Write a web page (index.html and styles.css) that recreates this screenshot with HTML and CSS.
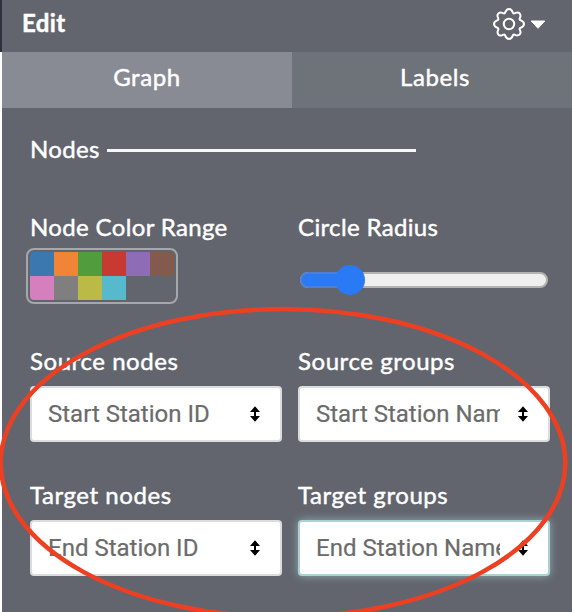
FILE: index.html
```
<!DOCTYPE html>
<html lang="en">
<head>
<meta charset="utf-8">
<title>Edit</title>
<link rel="stylesheet" href="styles.css">
</head>
<body>
<div class="panel">
  <header class="header">
    <h1 class="title">Edit</h1>
    <div class="settings">
      <svg class="gear" viewBox="-17 -17 34 34">
        <path d="M-4 -11.1C-3.3 -13 -2.7 -15 0 -15S3.3 -13 4 -11.1C4.7 -10.1 5.6 -10.7 6.5 -11.1C8 -11.7 9.4 -12 10.6 -10.6S11.7 -8 11.1 -6.5C10.7 -5.6 10.1 -4.7 11.1 -4C13 -3.3 15 -2.7 15 0S13 3.3 11.1 4C10.1 4.7 10.7 5.6 11.1 6.5C11.7 8 12 9.4 10.6 10.6S8 11.7 6.5 11.1C5.6 10.7 4.7 10.1 4 11.1C3.3 13 2.7 15 0 15S-3.3 13 -4 11.1C-4.7 10.1 -5.6 10.7 -6.5 11.1C-8 11.7 -9.4 12 -10.6 10.6S-11.7 8 -11.1 6.5C-10.7 5.6 -10.1 4.7 -11.1 4C-13 3.3 -15 2.7 -15 0S-13 -3.3 -11.1 -4C-10.1 -4.7 -10.7 -5.6 -11.1 -6.5C-11.7 -8 -12 -9.4 -10.6 -10.6S-8 -11.7 -6.5 -11.1C-5.6 -10.7 -4.7 -10.1 -4 -11.1Z"/>
        <circle r="5.2"/>
      </svg>
      <svg class="caret" viewBox="0 0 16 10"><path d="M1.2 1H14.8L8 8.3Z"/></svg>
    </div>
  </header>
  <nav class="tabs">
    <div class="tab active">Graph</div>
    <div class="tab">Labels</div>
  </nav>
  <main class="content">
    <div class="section"><span class="section-name">Nodes</span><span class="rule"></span></div>
    <div class="fields">
      <div class="field">
        <div class="label">Node Color Range</div>
        <div class="palette">
          <i class="blue"></i><i class="orange"></i><i class="green"></i><i class="red"></i><i class="purple"></i><i class="brown"></i>
          <i class="pink"></i><i class="gray"></i><i class="olive"></i><i class="cyan"></i>
        </div>
      </div>
      <div class="field">
        <div class="label">Circle Radius</div>
        <div class="slider"><div class="fill"></div><div class="thumb"></div></div>
      </div>
      <div class="field">
        <div class="label wide">Source nodes</div>
        <div class="select"><span class="value">Start Station ID</span><svg class="arrows" viewBox="0 0 10 16"><path d="M5 0.3L10 6H6V10H10L5 15.7L0 10H4V6H0Z"/></svg></div>
      </div>
      <div class="field">
        <div class="label wide">Source groups</div>
        <div class="select"><span class="value">Start Station Name</span><svg class="arrows" viewBox="0 0 10 16"><path d="M5 0.3L10 6H6V10H10L5 15.7L0 10H4V6H0Z"/></svg></div>
      </div>
      <div class="field">
        <div class="label wide">Target nodes</div>
        <div class="select"><span class="value">End Station ID</span><svg class="arrows" viewBox="0 0 10 16"><path d="M5 0.3L10 6H6V10H10L5 15.7L0 10H4V6H0Z"/></svg></div>
      </div>
      <div class="field">
        <div class="label wide">Target groups</div>
        <div class="select focused"><span class="value">End Station Name</span><svg class="arrows" viewBox="0 0 10 16"><path d="M5 0.3L10 6H6V10H10L5 15.7L0 10H4V6H0Z"/></svg></div>
      </div>
    </div>
  </main>
  <svg class="annotation" viewBox="0 0 572 612"><ellipse cx="283" cy="463" rx="282.3" ry="154"/></svg>
</div>
</body>
</html>
```
FILE: styles.css
```
* { box-sizing: border-box; }
body { margin: 0; overflow: hidden; background: #fff; }
.panel {
  position: relative;
  width: 572px;
  height: 612px;
  padding-left: 2px;
  overflow: hidden;
  background: linear-gradient(#2e303e 52px, #fff 52px);
  color: #fff;
  font: 24px/32px Lato, "Open Sans", sans-serif;
  letter-spacing: 0.35px;
  -webkit-text-stroke: 0.45px currentColor;
}
.header {
  display: flex;
  justify-content: space-between;
  height: 52px;
  padding: 7px 26px 0 20px;
  background: #62656d;
}
.title { margin: 0; font-size: 24px; line-height: 32px; font-weight: 700; }
.settings { display: flex; align-items: flex-start; }
.gear { width: 34px; height: 34px; fill: none; stroke: #fff; stroke-width: 2; }
.caret { width: 16px; height: 10px; margin: 13px 0 0 4px; fill: #fff; stroke: #fff; stroke-width: 1; stroke-linejoin: round; }
.gear, .caret { flex: none; }
.tabs { display: flex; height: 56px; overflow: hidden; }
.tab { flex: 0 0 286px; padding-top: 9px; background: #6e7279; text-align: center; letter-spacing: 0.6px; }
.tab.active { flex-basis: 290px; background: #888b94; }
.content { height: 504px; padding: 25px 22px 0 28px; background: #62656d; }
.section { display: flex; height: 32px; align-items: center; }
.section-name { width: 77px; }
.rule { width: 309px; height: 3px; margin-top: 2px; background: #f6f6f7; }
.fields { display: grid; grid-template-columns: 252px 252px; grid-template-rows: 134px 134px 134px; column-gap: 16px; margin-top: 46px; }
.label { height: 32px; white-space: nowrap; }
.label.wide { letter-spacing: 0.56px; }
.palette {
  display: grid;
  grid-template-columns: repeat(6, 24px);
  grid-auto-rows: 24px;
  width: 152px;
  height: 56px;
  margin: 5px 0 0 -4px;
  padding: 2px;
  border: 2px solid #a5a7ab;
  border-radius: 8px;
}
.blue { background: #3b78af; border-top-left-radius: 4px; }
.orange { background: #f08536; }
.green { background: #519d3e; }
.red { background: #c63a32; }
.purple { background: #8e6db6; }
.brown { background: #84594e; border-top-right-radius: 4px; }
.pink { background: #d57fbe; border-bottom-left-radius: 4px; }
.gray { background: #7f7f7f; }
.olive { background: #bcba46; }
.cyan { background: #57bacc; }
.slider {
  position: relative;
  width: 248px;
  height: 16px;
  margin: 29px 0 0 2px;
  border: 2px solid #b2b2b2;
  border-radius: 8px;
  background: #efefef;
}
.fill { width: 48px; height: 16px; margin: -2px; border: 2px solid #4f7ed2; border-right: 0; border-radius: 8px 0 0 8px; background: #2a7af6; }
.thumb { position: absolute; left: 33px; top: -9px; width: 30px; height: 30px; border-radius: 50%; background: #2a7af6; }
.select {
  display: flex;
  align-items: center;
  width: 252px;
  height: 56px;
  margin-top: 9px;
  padding: 0 20px 0 16px;
  border: 2px solid #dcdcdc;
  border-radius: 4px;
  background: #fff;
  color: #6b6b6b;
  font-family: Roboto, sans-serif;
  letter-spacing: 0;
  -webkit-text-stroke: 0.2px currentColor;
}
.select.focused { border-color: #acd1d5; box-shadow: 0 0 8px rgba(159, 198, 202, 0.75); }
.value { flex: 0 0 184px; overflow: hidden; white-space: nowrap; }
.arrows { flex: none; width: 10px; height: 16px; margin-left: 18px; fill: #000; }
.annotation { position: absolute; left: 0; top: 0; width: 572px; height: 612px; fill: none; stroke: #ed4023; stroke-width: 4.5; }
```
